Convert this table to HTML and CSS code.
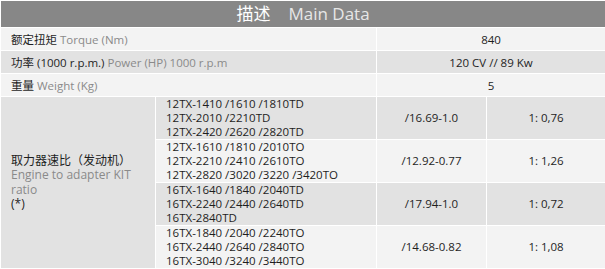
FILE: index.html
```html
<!DOCTYPE html>
<html>
<head>
<meta charset="utf-8">
<link rel="stylesheet" href="styles.css">
</head>
<body>
<table class="spec">
  <colgroup>
    <col class="c1"><col class="c2"><col class="c3"><col class="c4">
  </colgroup>
  <thead>
    <tr><th colspan="4" class="head"><span class="zh">描述</span><span class="en">Main Data</span></th></tr>
  </thead>
  <tbody>
    <tr class="light">
      <td colspan="2" class="lbl">额定扭矩 <span class="mut">Torque (Nm)</span></td>
      <td colspan="2" class="val">840</td>
    </tr>
    <tr class="dark">
      <td colspan="2" class="lbl">功率 (1000 r.p.m.) <span class="mut">Power (HP) 1000 r.p.m</span></td>
      <td colspan="2" class="val">120 CV // 89 Kw</td>
    </tr>
    <tr class="light">
      <td colspan="2" class="lbl">重量 <span class="mut">Weight (Kg)</span></td>
      <td colspan="2" class="val">5</td>
    </tr>
    <tr class="dark grp">
      <td rowspan="4" class="lbl big">
        <div class="ln">取力器速比（发动机）</div>
        <div class="ln mut">Engine to adapter KIT</div>
        <div class="ln mut">ratio</div>
        <div class="ln">(*)</div>
      </td>
      <td class="models">12TX-1410 /1610 /1810TD<br>12TX-2010 /2210TD<br>12TX-2420 /2620 /2820TD</td>
      <td class="val">/16.69-1.0</td>
      <td class="val">1: 0,76</td>
    </tr>
    <tr class="light grp">
      <td class="models">12TX-1610 /1810 /2010TO<br>12TX-2210 /2410 /2610TO<br>12TX-2820 /3020 /3220 /3420TO</td>
      <td class="val">/12.92-0.77</td>
      <td class="val">1: 1,26</td>
    </tr>
    <tr class="dark grp">
      <td class="models">16TX-1640 /1840 /2040TD<br>16TX-2240 /2440 /2640TD<br>16TX-2840TD</td>
      <td class="val">/17.94-1.0</td>
      <td class="val">1: 0,72</td>
    </tr>
    <tr class="light grp">
      <td class="models">16TX-1840 /2040 /2240TO<br>16TX-2440 /2640 /2840TO<br>16TX-3040 /3240 /3440TO</td>
      <td class="val">/14.68-0.82</td>
      <td class="val">1: 1,08</td>
    </tr>
  </tbody>
</table>
</body>
</html>
```
FILE: styles.css
```css
html, body {
  margin: 0;
  padding: 0;
  background: #ffffff;
}
body {
  font-family: "Open Sans", "Noto Sans CJK SC", sans-serif;
  font-size: 11.5px;
  color: #1e1e1e;
}
.spec {
  width: 605px;
  border-collapse: collapse;
  table-layout: fixed;
}
.c1 { width: 155px; }
.c2 { width: 221px; }
.c3 { width: 110px; }
.c4 { width: 119px; }
.spec td, .spec th {
  border: 1px solid #ffffff;
  padding: 0;
}
.head {
  background: #878787;
  height: 26px;
  font-weight: normal;
  font-size: 17px;
  text-align: center;
  line-height: 26px;
}
.head .zh { color: #ffffff; margin-right: 18px; }
.head .en { color: #e6e6e6; }
.light td { background: #f3f3f3; }
.dark td { background: #e2e2e2; }
.light td, .dark td { height: 22px; }
.lbl {
  padding-left: 10px !important;
  text-align: left;
}
.val { text-align: center; }
.mut { color: #8a8a8a; }
.grp td { height: 42px; line-height: 14px; }
.models { padding-left: 10px !important; }
.big {
  background: #e2e2e2 !important;
  vertical-align: middle;
  font-size: 12px;
}
.big .ln { line-height: 14.5px; }
```
